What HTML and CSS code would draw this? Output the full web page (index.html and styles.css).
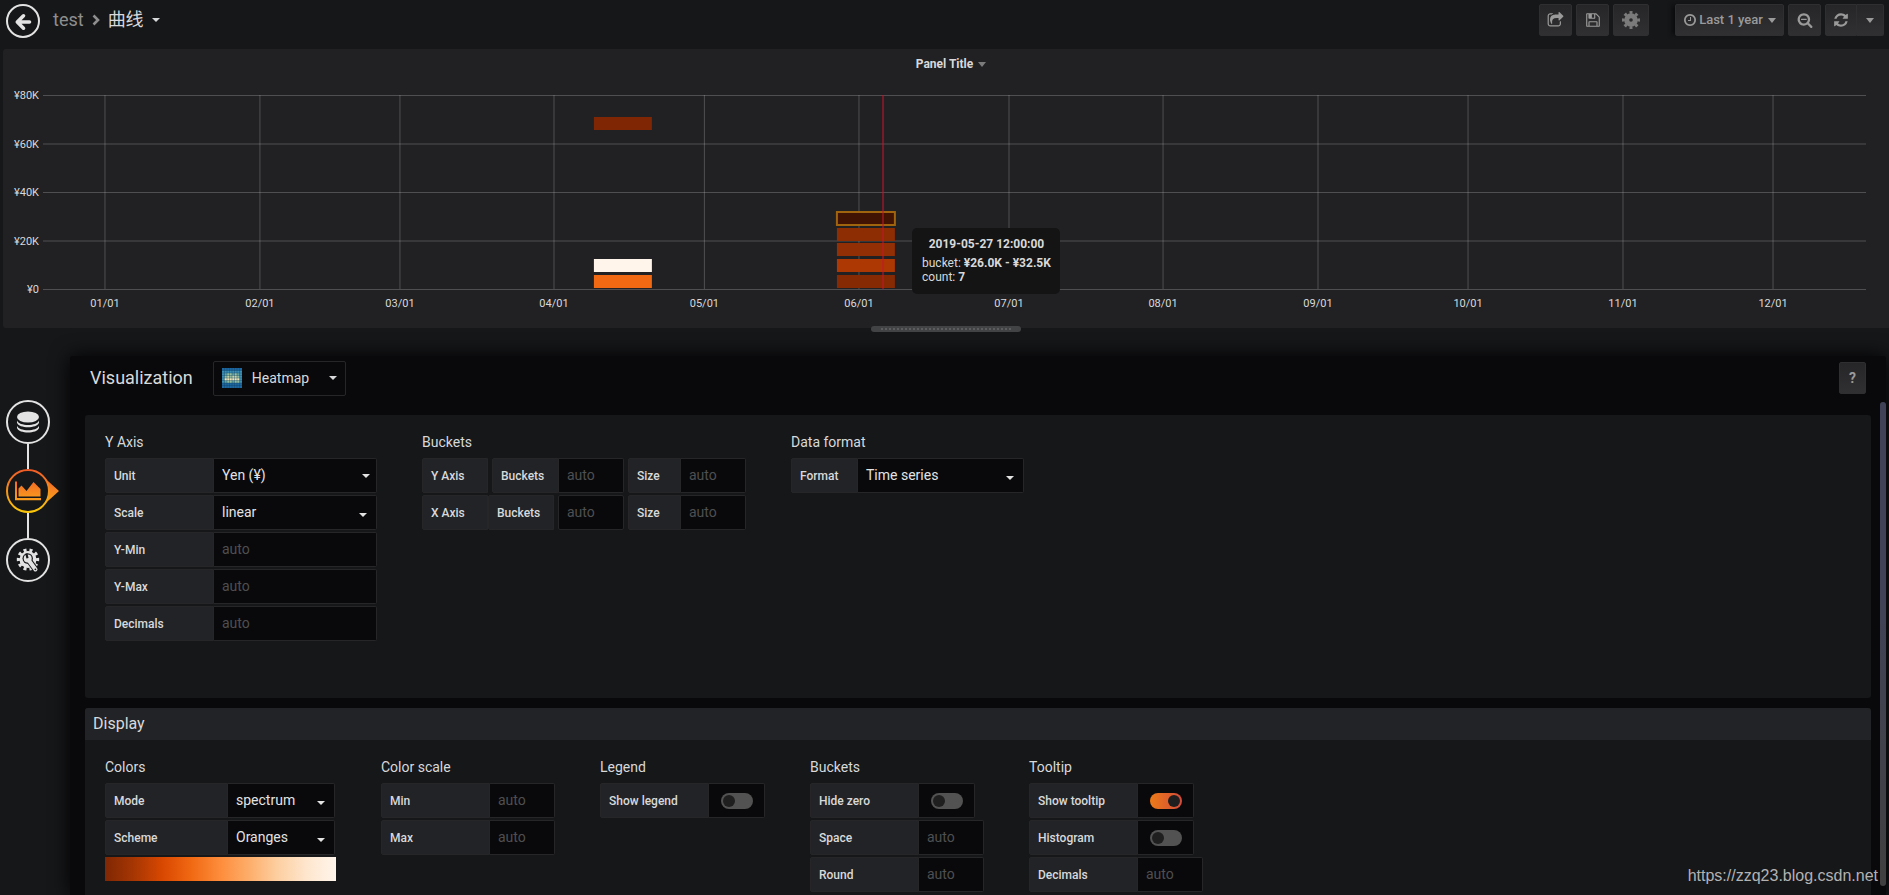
FILE: index.html
```html
<!DOCTYPE html>
<html lang="en">
<head>
<meta charset="utf-8">
<title>曲线 - Grafana</title>
<link rel="stylesheet" href="styles.css">
</head>
<body>
<header class="navbar">
  <button class="back" aria-label="Back">
    <svg viewBox="0 0 34 34" width="34" height="34"><circle cx="17" cy="17" r="16" fill="none" stroke="currentColor" stroke-width="2"/><path d="M23.500 18H13M17.500 11.800L11.300 18L17.500 24.200" fill="none" stroke="currentColor" stroke-width="3.600" stroke-linecap="round" stroke-linejoin="round"/></svg>
  </button>
  <nav class="crumbs">
    <a href="#" class="folder">test</a>
    <svg class="chev" viewBox="0 0 8 12" width="8" height="12"><path d="M1.500 1.500L6 6L1.500 10.500" fill="none" stroke="currentColor" stroke-width="2.600"/></svg>
    <a href="#" class="dash">曲线 <span class="caret"></span></a>
  </nav>
  <div class="actions">
    <button class="nav-btn" aria-label="Share"><svg viewBox="0 0 1792 1792" width="17" height="17"><path d="M1472 989v259q0 119-84.500 203.500t-203.500 84.500h-832q-119 0-203.500-84.500t-84.500-203.500v-832q0-119 84.500-203.500t203.500-84.500h255q13 0 22.500 9.500t9.500 22.500q0 27-26 32-77 26-133 60-10 4-16 4h-112q-66 0-113 47t-47 113v832q0 66 47 113t113 47h832q66 0 113-47t47-113v-214q0-19 18-29 28-13 54-37 16-16 35-8 21 9 21 29zm237-496l-384 384q-18 19-45 19-12 0-25-5-39-17-39-59v-192h-160q-323 0-438 131-119 137-74 473 3 23-20 34-8 2-12 2-16 0-26-13-10-14-21-31t-39.500-68.500-49.500-99.500-38.500-114-17.500-122q0-49 3.500-91t14-90 28-88 47-81.500 68.500-74 94.500-61.500 124.500-48.500 159.500-30.500 196.500-11h160v-192q0-42 39-59 13-5 25-5 26 0 45 19l384 384q19 19 19 45t-19 45z"/></svg></button>
    <button class="nav-btn save" aria-label="Save"><svg viewBox="0 0 1792 1792" width="16" height="16"><path d="M512 1536h768v-384h-768v384zm896 0h128v-896q0-14-10-38.500t-20-34.500l-281-281q-10-10-34-20t-39-10v416q0 40-28 68t-68 28h-576q-40 0-68-28t-28-68v-416h-128v1280h128v-416q0-40 28-68t68-28h832q40 0 68 28t28 68v416zm-384-928v-320q0-13-9.500-22.500t-22.500-9.500h-192q-13 0-22.500 9.500t-9.500 22.500v320q0 13 9.500 22.500t22.500 9.500h192q13 0 22.500-9.500t9.500-22.500zm640 32v928q0 40-28 68t-68 28h-1344q-40 0-68-28t-28-68v-1344q0-40 28-68t68-28h928q40 0 88 20t76 48l280 280q28 28 48 76t20 88z"/></svg></button>
    <button class="nav-btn cog" aria-label="Settings"><svg viewBox="0 0 18 18" width="18" height="18" fill="none" stroke="currentColor"><circle cx="9" cy="9" r="4.300" stroke-width="5"/><circle cx="9" cy="9" r="7.600" stroke-width="2.800" pathLength="80" stroke-dasharray="5 5" stroke-dashoffset="2.500"/></svg></button>
    <button class="nav-btn time"><svg viewBox="0 0 1792 1792" width="14" height="14"><path d="M1024 544v448q0 14-9 23t-23 9h-320q-14 0-23-9t-9-23v-64q0-14 9-23t23-9h224v-352q0-14 9-23t23-9h64q14 0 23 9t9 23zm416 352q0-148-73-273t-198-198-273-73-273 73-198 198-73 273 73 273 198 198 273 73 273-73 198-198 73-273zm224 0q0 209-103 385.500t-279.500 279.500-385.500 103-385.500-103-279.500-279.500-103-385.500 103-385.500 279.500-279.500 385.500-103 385.500 103 279.500 279.500 103 385.500z"/></svg><span>Last 1 year</span><span class="caret"></span></button>
    <button class="nav-btn" aria-label="Zoom out"><svg viewBox="0 0 1792 1792" width="16" height="16"><path d="M1088 800v64q0 13-9.500 22.500t-22.500 9.500h-576q-13 0-22.500-9.500t-9.500-22.500v-64q0-13 9.500-22.500t22.500-9.500h576q13 0 22.500 9.500t9.500 22.500zm128 32q0-185-131.500-316.500t-316.500-131.500-316.500 131.500-131.500 316.500 131.500 316.500 316.500 131.500 316.500-131.500 131.500-316.500zm512 832q0 53-37.500 90.500t-90.500 37.500q-54 0-90-38l-343-342q-179 124-399 124-143 0-273.500-55.500t-225-150-150-225-55.500-273.500 55.500-273.500 150-225 225-150 273.500-55.500 273.500 55.500 225 150 150 225 55.500 273.500q0 220-124 399l343 343q37 37 37 90z"/></svg></button>
    <div class="btn-pair">
      <button class="nav-btn refresh" aria-label="Refresh"><svg viewBox="0 0 1792 1792" width="16" height="16"><path d="M1639 1056q0 5-1 7-64 268-268 434.500t-478 166.500q-146 0-282.500-55t-243.500-157l-129 129q-19 19-45 19t-45-19-19-45v-448q0-26 19-45t45-19h448q26 0 45 19t19 45-19 45l-137 137q71 66 161 102t187 36q134 0 250-65t186-179q11-17 53-117 8-23 30-23h192q13 0 22.500 9.500t9.500 22.500zm25-800v448q0 26-19 45t-45 19h-448q-26 0-45-19t-19-45 19-45l138-138q-148-137-349-137-134 0-250 65t-186 179q-11 17-53 117-8 23-30 23h-199q-13 0-22.500-9.500t-9.500-22.500v-7q65-268 270-434.500t480-166.500q146 0 284 55.500t245 156.500l130-129q19-19 45-19t45 19 19 45z"/></svg></button>
      <button class="nav-btn interval" aria-label="Refresh interval"><span class="caret"></span></button>
    </div>
  </div>
</header>

<section class="panel">
  <h1 class="panel-title">Panel Title <span class="caret"></span></h1>
  <div class="chart">
    <svg class="plot" width="100%" height="224">
      <g class="grid">
        <line x1="0" x2="100%" y1="0.500" y2="0.500"/><line x1="0" x2="100%" y1="49" y2="49"/><line x1="0" x2="100%" y1="97.500" y2="97.500"/><line x1="0" x2="100%" y1="146" y2="146"/><line x1="0" x2="100%" y1="194.500" y2="194.500"/>
        <line x1="3.4%" x2="3.4%" y1="0" y2="194"/><line x1="11.9%" x2="11.9%" y1="0" y2="194"/><line x1="19.58%" x2="19.58%" y1="0" y2="194"/><line x1="28.03%" x2="28.03%" y1="0" y2="194"/><line x1="36.28%" x2="36.28%" y1="0" y2="194"/><line x1="44.76%" x2="44.76%" y1="0" y2="194"/><line x1="52.99%" x2="52.99%" y1="0" y2="194"/><line x1="61.44%" x2="61.44%" y1="0" y2="194"/><line x1="69.94%" x2="69.94%" y1="0" y2="194"/><line x1="78.17%" x2="78.17%" y1="0" y2="194"/><line x1="86.67%" x2="86.67%" y1="0" y2="194"/><line x1="94.9%" x2="94.9%" y1="0" y2="194"/>
      </g>
      <g class="ylab">
        <text x="-4" y="4">¥80K</text><text x="-4" y="53">¥60K</text><text x="-4" y="101">¥40K</text><text x="-4" y="150">¥20K</text><text x="-4" y="198">¥0</text>
      </g>
      <g class="xlab">
        <text x="3.4%" y="212">01/01</text><text x="11.9%" y="212">02/01</text><text x="19.58%" y="212">03/01</text><text x="28.03%" y="212">04/01</text><text x="36.28%" y="212">05/01</text><text x="44.76%" y="212">06/01</text><text x="52.99%" y="212">07/01</text><text x="61.44%" y="212">08/01</text><text x="69.94%" y="212">09/01</text><text x="78.17%" y="212">10/01</text><text x="86.67%" y="212">11/01</text><text x="94.9%" y="212">12/01</text>
      </g>
      <g>
        <rect x="30.22%" y="22" width="3.18%" height="13" fill="#7f2704"/>
        <rect x="30.22%" y="164" width="3.18%" height="13" fill="#fff5eb"/>
        <rect x="30.22%" y="180" width="3.18%" height="13" fill="#f16913"/>
        <rect x="43.55%" y="117" width="3.18%" height="13" fill="#401302" stroke="#a0640f" stroke-width="2"/>
        <rect x="43.55%" y="133" width="3.18%" height="13" fill="#8c2d04"/>
        <rect x="43.55%" y="148" width="3.18%" height="13" fill="#932f04"/>
        <rect x="43.55%" y="164" width="3.18%" height="13" fill="#ad3803"/>
        <rect x="43.55%" y="180" width="3.18%" height="13" fill="#862a04"/>
      </g>
      <line class="cross" x1="46.08%" x2="46.08%" y1="0" y2="194"/>
    </svg>
    <div class="tip">
      <div class="tip-time">2019-05-27 12:00:00</div>
      <div>bucket: <b>¥26.0K - ¥32.5K</b></div>
      <div>count: <b>7</b></div>
    </div>
  </div>
  <div class="resizer"></div>
</section>

<main class="editor">
  <aside class="rail">
    <button class="tab" aria-label="Queries"><svg viewBox="0 0 44 44" width="44" height="44"><circle cx="22" cy="22" r="21" fill="none" stroke="currentColor" stroke-width="2"/><g fill="currentColor"><ellipse cx="22" cy="17" rx="11" ry="5.500"/><path d="M11 20.500c2 6 20 6 22 0v2.200c-2 6-20 6-22 0zM11 25.700c2 6 20 6 22 0v2.200c-2 6-20 6-22 0z"/></g></svg></button>
    <span class="link"></span>
    <button class="tab" aria-label="Visualization"><svg class="active-icon" viewBox="0 0 53 44" width="53" height="44"><defs><linearGradient id="hot" gradientUnits="userSpaceOnUse" x1="0" y1="0" x2="0" y2="44"><stop offset="0" stop-color="#f05a28"/><stop offset="1" stop-color="#fbca0a"/></linearGradient><linearGradient id="hot2" gradientUnits="userSpaceOnUse" x1="0" y1="6" x2="0" y2="38"><stop offset="0" stop-color="#f05a28"/><stop offset="1" stop-color="#fbb01a"/></linearGradient></defs><path d="M37.500 8L53 22L37.500 36Q47 22 37.500 8z" fill="url(#hot2)"/><circle cx="22" cy="22" r="21" fill="#161719" stroke="url(#hot)" stroke-width="2"/><path d="M9 12.500h2v16.500h24v2.200H9zM12.500 19.500L15.500 16.500L20.500 22L27.500 13L34.500 20V27.500H12.500z" fill="url(#hot2)"/></svg></button>
    <span class="link"></span>
    <button class="tab" aria-label="General"><svg viewBox="0 0 44 44" width="44" height="44"><circle cx="22" cy="22" r="21" fill="none" stroke="currentColor" stroke-width="2"/><circle cx="22" cy="21.500" r="8.500" fill="currentColor"/><circle cx="22" cy="21.500" r="9.500" fill="none" stroke="currentColor" stroke-width="3.400" pathLength="120" stroke-dasharray="6 6" stroke-dashoffset="3"/><path d="M23 22.500L31 33.500" stroke="#161719" stroke-width="6"/><circle cx="21.700" cy="20.500" r="5.200" fill="#161719"/><path d="M22.500 22L29.500 31.500" stroke="currentColor" stroke-width="4" stroke-linecap="round"/><circle cx="21.700" cy="20.500" r="4" fill="currentColor"/><path d="M20.300 15.500L21.500 20.200" stroke="#161719" stroke-width="2.200"/><circle cx="29.400" cy="31.300" r="0.900" fill="#161719"/></svg></button>
  </aside>

  <div class="sheet">
    <div class="sheet-head">
      <h2>Visualization</h2>
      <button class="viz-picker">
        <svg viewBox="0 0 20 20" width="20" height="20"><rect width="20" height="20" fill="#1c67a0"/><path d="M0 2.500h20v12.500H0z" fill="#3b8fb5"/><path d="M2.500 5h15v10h-15z" fill="#62a3a5"/><path d="M5 5h5v2.500h2.500V5H15v2.500h2.500V15h-5v-2.500H10V15H5v-2.500H2.500v-5H5z" fill="#94bfa3"/><path d="M2.500 10h15v2.500h-15z" fill="#ece6b8"/><path d="M5 7.500h2.500V10H5zM10 7.500h5V10h-5z" fill="#c5d3a8"/><path d="M0 2.500h20M0 5h20M0 7.500h20M0 10h20M0 12.500h20M0 15h20M0 17.500h20M2.500 0v20M5 0v20M7.500 0v20M10 0v20M12.500 0v20M15 0v20M17.500 0v20" stroke="#0c3d62" stroke-opacity=".6" stroke-width=".6"/></svg>
        <span>Heatmap</span><span class="caret"></span>
      </button>
      <button class="nav-btn help">?</button>
    </div>

    <div class="sheet-body">
      <section class="box axes">
        <div class="group">
          <h3>Y Axis</h3>
          <div class="row"><label class="lab w109" for="unit">Unit</label><span class="sel w163 near"><select id="unit"><option>Yen (¥)</option></select></span></div>
          <div class="row"><label class="lab w109" for="scale">Scale</label><span class="sel w163"><select id="scale"><option>linear</option></select></span></div>
          <div class="row"><label class="lab w109" for="ymin">Y-Min</label><input class="inp w163" id="ymin" placeholder="auto"></div>
          <div class="row"><label class="lab w109" for="ymax">Y-Max</label><input class="inp w163" id="ymax" placeholder="auto"></div>
          <div class="row"><label class="lab w109" for="ydec">Decimals</label><input class="inp w163" id="ydec" placeholder="auto"></div>
        </div>
        <div class="group">
          <h3>Buckets</h3>
          <div class="row"><span class="lab w66 gap">Y Axis</span><label class="lab w67" for="yb">Buckets</label><input class="inp w65 gap" id="yb" placeholder="auto"><label class="lab w53" for="ys">Size</label><input class="inp w65" id="ys" placeholder="auto"></div>
          <div class="row"><span class="lab w66">X Axis</span><label class="lab w66 gap" for="xb">Buckets</label><input class="inp solo w66 gap" id="xb" placeholder="auto"><label class="lab w53" for="xs">Size</label><input class="inp w65" id="xs" placeholder="auto"></div>
        </div>
        <div class="group">
          <h3>Data format</h3>
          <div class="row"><label class="lab w67" for="fmt">Format</label><span class="sel w166"><select id="fmt"><option>Time series</option></select></span></div>
        </div>
      </section>

      <section class="box">
        <h2 class="box-head">Display</h2>
        <div class="box-groups">
          <div class="group">
            <h3>Colors</h3>
            <div class="row"><label class="lab w123" for="mode">Mode</label><span class="sel w107"><select id="mode"><option>spectrum</option></select></span></div>
            <div class="row"><label class="lab w123" for="scheme">Scheme</label><span class="sel w107"><select id="scheme"><option>Oranges</option></select></span></div>
            <div class="ramp"></div>
          </div>
          <div class="group">
            <h3>Color scale</h3>
            <div class="row"><label class="lab w109" for="cmin">Min</label><input class="inp w65" id="cmin" placeholder="auto"></div>
            <div class="row"><label class="lab w109" for="cmax">Max</label><input class="inp w65" id="cmax" placeholder="auto"></div>
          </div>
          <div class="group">
            <h3>Legend</h3>
            <div class="row"><label class="lab w109" for="leg">Show legend</label><span class="sw"><input type="checkbox" id="leg"></span></div>
          </div>
          <div class="group">
            <h3>Buckets</h3>
            <div class="row"><label class="lab w109" for="hz">Hide zero</label><span class="sw"><input type="checkbox" id="hz"></span></div>
            <div class="row"><label class="lab w109" for="space">Space</label><input class="inp w65" id="space" placeholder="auto"></div>
            <div class="row"><label class="lab w109" for="round">Round</label><input class="inp w65" id="round" placeholder="auto"></div>
          </div>
          <div class="group">
            <h3>Tooltip</h3>
            <div class="row"><label class="lab w109" for="stt">Show tooltip</label><span class="sw"><input type="checkbox" id="stt" checked></span></div>
            <div class="row"><label class="lab w109" for="hist">Histogram</label><span class="sw"><input type="checkbox" id="hist"></span></div>
            <div class="row"><label class="lab w109" for="tdec">Decimals</label><input class="inp w65" id="tdec" placeholder="auto"></div>
          </div>
        </div>
      </section>
    </div>
    <div class="scroll"></div>
  </div>
</main>
<div class="mark">https://zzq23.blog.csdn.net</div>
</body>
</html>
```
FILE: styles.css
```css
* { box-sizing: border-box; }
html, body { height: 100%; }
body {
  margin: 0;
  display: flex;
  flex-direction: column;
  overflow: hidden;
  background: #161719;
  color: #d8d9da;
  font: 14px/20px Roboto, "Noto Sans CJK SC", sans-serif;
}
button { font: inherit; color: inherit; margin: 0; padding: 0; border: 0; background: none; }
h1, h2, h3 { margin: 0; font-weight: 400; }
a { color: inherit; text-decoration: none; }
svg { display: block; }

.caret {
  display: inline-block;
  border: 4px solid transparent;
  border-top-color: currentColor;
  border-bottom: 0;
}

/* top bar */
.navbar { display: flex; align-items: flex-start; height: 49px; padding: 4px 5px 0 6px; flex: none; }
.back { width: 34px; height: 34px; color: #e3e3e3; }
.crumbs { display: flex; align-items: center; gap: 8px; height: 32px; margin-left: 13px; font-size: 18px; }
.folder, .chev { color: #8e8e8e; }
.dash { display: flex; align-items: center; gap: 8px; }
.actions { display: flex; gap: 4px; margin-left: auto; }
.nav-btn {
  display: flex; align-items: center; justify-content: center; gap: 3px;
  width: 33px; height: 32px;
  color: #9a9a9a;
  background: linear-gradient(#262628, #303032);
  border: 1px solid #2f2f32;
  border-radius: 2px;
}
.nav-btn svg { fill: currentColor; flex: none; }
.nav-btn.cog { width: 36px; color: #7b7b7b; }
.nav-btn.cog svg { fill: none; }
.nav-btn.time { width: 109px; margin-left: 22px; gap: 2px; font-size: 13px; font-weight: 500; box-shadow: -4px 0 4px -1px #0b0c0d; }
.nav-btn.time .caret { margin-left: 3px; }
.nav-btn .caret { border-width: 5px 4px 0; }
.btn-pair { display: flex; }
.refresh { border-radius: 2px 0 0 2px; width: 32px; }
.interval { border-radius: 0 2px 2px 0; width: 27px; border-left: 0; }

/* graph panel */
.panel { position: relative; flex: none; height: 279px; margin-left: 3px; background: #212124; border-radius: 3px 0 0 3px; }
.panel-title {
  display: flex; align-items: center; justify-content: center; gap: 5px;
  height: 46px; padding: 0 0 16px 10px;
  font-size: 12px; font-weight: 700;
}
.panel-title .caret { border-width: 5px 4px 0; color: #7b7b7b; }
.chart { position: relative; margin: 0 23px 0 40px; }
.plot { overflow: visible; }
.grid line { stroke: #c8c8c8; stroke-opacity: .28; }
.plot text { fill: #d8d9da; font-size: 11px; }
.ylab { text-anchor: end; }
.xlab { text-anchor: middle; }
.cross { stroke: #c4162a; stroke-opacity: .55; stroke-width: 2; }
.tip {
  position: absolute; left: 47.67%; top: 133px;
  padding: 9px 9px 10px 10px;
  background: #141414; border-radius: 5px;
  font-size: 12px; line-height: 14px; white-space: nowrap;
}
.tip-time { margin-bottom: 5px; text-align: center; font-weight: 700; }
.resizer {
  position: absolute; bottom: -4px; left: calc(50% - 75px); width: 150px; height: 6px;
  border-radius: 3px; background: #424345;
}
.resizer::after { content: ""; position: absolute; inset: 2px 10px; background: repeating-linear-gradient(90deg, #5c5d5f 0 2px, transparent 2px 4px); }

/* editor */
.editor { display: flex; flex: 1; min-height: 0; padding: 28px 3px 0 6px; }
.rail { display: flex; flex-direction: column; align-items: flex-start; width: 64px; padding-top: 44px; flex: none; position: relative; z-index: 1; }
.tab { width: 44px; height: 44px; color: #e3e3e3; }
.link { width: 2px; height: 25px; margin-left: 21px; background: #e3e3e3; }
.active-icon { overflow: visible; }
.sheet {
  position: relative; flex: 1; min-width: 0;
  display: flex; flex-direction: column;
  padding: 0 15px;
  background: #09090b; border-radius: 3px 3px 0 0;
  box-shadow: 0 0 20px #000;
}
.sheet-head { display: flex; align-items: center; flex: none; height: 59px; padding: 0 5px 15px; }
.sheet-head h2 { font-size: 18px; }
.viz-picker {
  display: flex; align-items: center; gap: 10px;
  width: 133px; height: 35px; margin-left: 20px; padding: 0 8px;
  border: 1px solid #262628; border-radius: 2px;
}
.viz-picker .caret { margin-left: auto; }
.help { width: 27px; margin-left: auto; font-weight: 700; }
.sheet-body { display: flex; flex-direction: column; gap: 10px; flex: 1; min-height: 0; overflow: hidden; }
.box { flex: none; background: #161719; border-radius: 3px; }
.box:last-child { flex: 1 0 auto; border-radius: 3px 3px 0 0; }
.axes { display: flex; gap: 45px; padding: 17px 20px 55px; }
.box-head { height: 32px; padding: 0 8px; font-size: 16px; line-height: 32px; background: #222326; border-radius: 3px 3px 0 0; }
.box-groups { display: flex; gap: 45px; padding: 17px 20px 3px; }
.group h3 { height: 26px; font-size: 14px; line-height: 20px; }
.row { display: flex; height: 35px; margin-bottom: 2px; }
.lab {
  flex: none; padding: 0 8px;
  font-size: 12px; font-weight: 500; line-height: 34px;
  background: #222326; border: 1px solid #262628; border-radius: 2px 0 0 2px;
}
.inp, .sel, .sw { flex: none; background: #09090b; border: 1px solid #262628; border-left: 0; border-radius: 0 2px 2px 0; }
.inp { padding: 0 8px 2px; font: 14px/20px Roboto, sans-serif; color: #d8d9da; }
.inp.solo { border-left: 1px solid #262628; border-radius: 2px; }
.inp::placeholder { color: #4f4f51; opacity: 1; }
.sel { position: relative; }
.sel select { appearance: none; width: 100%; height: 100%; padding: 0 8px 2px; border: 0; background: none; color: #e3e3e3; font: 14px/20px Roboto, sans-serif; }
.sel::after {
  content: ""; position: absolute; right: 9px; top: 17px; pointer-events: none;
  border: 4px solid transparent; border-top-color: #e3e3e3; border-bottom: 0;
}
.sel.near::after { right: 6px; top: 15px; }
.gap { margin-right: 4px; }
.w53 { width: 53px; }
.w65 { width: 65px; }
.w66 { width: 66px; }
.w67 { width: 67px; }
.w107 { width: 107px; }
.w109 { width: 109px; }
.w123 { width: 123px; }
.w163 { width: 163px; }
.w166 { width: 166px; }
.sw { display: flex; align-items: center; justify-content: center; width: 56px; }
.sw input { appearance: none; display: flex; align-items: center; width: 32px; height: 16px; margin: 0; padding: 0 2px; border-radius: 8px; background: #525252; }
.sw input::before { content: ""; width: 12px; height: 12px; border-radius: 50%; background: #1f1f20; }
.sw input:checked { justify-content: flex-end; background: linear-gradient(90deg, #eb7b18, #d44a3a); }
.ramp { width: 231px; height: 24px; background: linear-gradient(90deg, #7f2704, #a63603, #d94801, #f16913, #fd8d3c, #fdae6b, #fdd0a2, #fee6ce, #fff5eb); }
.scroll { position: absolute; right: 0; top: 46px; bottom: 9px; width: 6px; border-radius: 3px; background: linear-gradient(#404357, #404357 40%, #404040); }
.mark { position: absolute; right: 11px; bottom: 9px; font: 16px/20px "Liberation Sans", sans-serif; color: #b2b2b3; }
```
